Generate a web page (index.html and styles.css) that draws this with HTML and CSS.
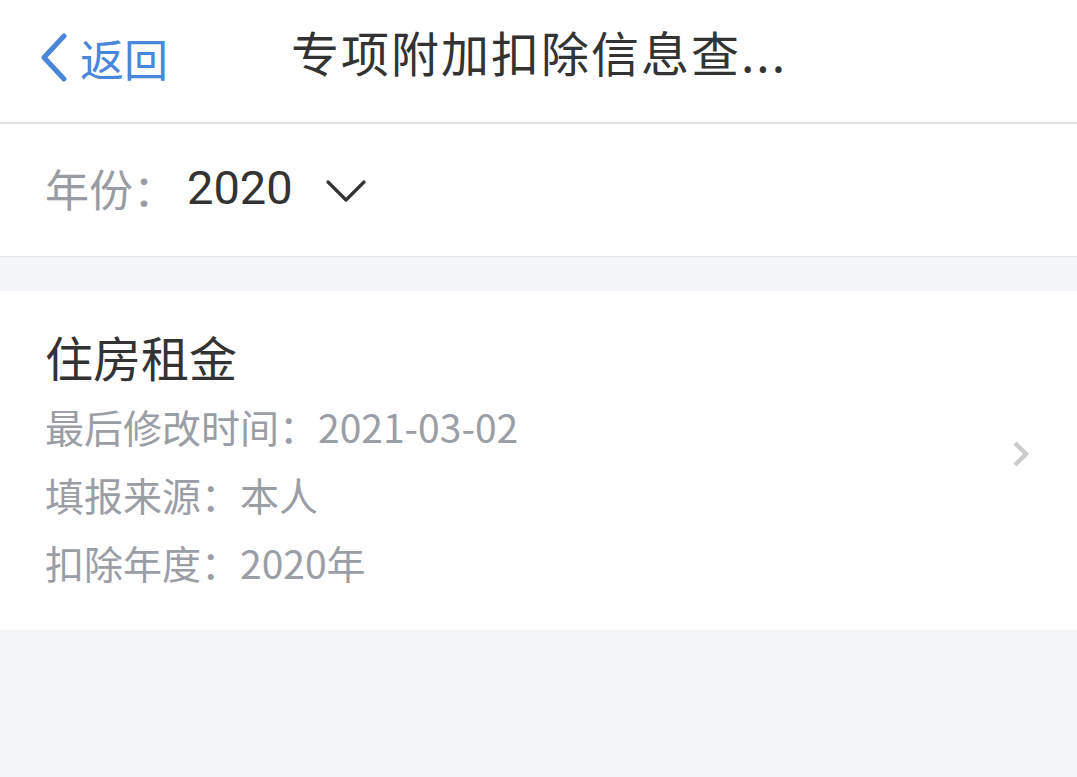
FILE: index.html
```html
<!DOCTYPE html>
<html lang="zh-CN">
<head>
<meta charset="utf-8">
<link rel="stylesheet" href="styles.css">
</head>
<body>
<div class="page">
  <header class="nav">
    <div class="back">
      <svg class="back-icon" width="30" height="50" viewBox="0 0 30 50"><polyline points="24,3 4,24.5 24,46" fill="none" stroke="#4a86d9" stroke-width="5" stroke-linecap="round" stroke-linejoin="round"/></svg>
      <span class="back-text">返回</span>
    </div>
    <div class="title">专项附加扣除信息查...</div>
  </header>
  <div class="year-row">
    <span class="year-label">年份：</span>
    <span class="year-value">2020</span>
    <svg class="year-caret" width="44" height="24" viewBox="0 0 44 24"><polyline points="3,3 21,21 39,3" fill="none" stroke="#333" stroke-width="3.2" stroke-linecap="round" stroke-linejoin="round"/></svg>
  </div>
  <div class="gap"></div>
  <div class="card">
    <div class="card-body">
      <div class="card-title">住房租金</div>
      <div class="info">最后修改时间：2021-03-02</div>
      <div class="info">填报来源：本人</div>
      <div class="info">扣除年度：2020年</div>
    </div>
    <svg class="arrow" width="22" height="30" viewBox="0 0 22 30"><polyline points="4,3 15,14 4,25" fill="none" stroke="#cdcdcd" stroke-width="4.5" stroke-linejoin="miter"/></svg>
  </div>
</div>
</body>
</html>
```
FILE: styles.css
```css
html, body {
  margin: 0;
  padding: 0;
  background: #f4f5f9;
}
body {
  font-family: "Noto Sans CJK SC", "Noto Sans", sans-serif;
  width: 1077px;
  height: 777px;
  overflow: hidden;
}
.page {
  display: flex;
  flex-direction: column;
}
.nav {
  height: 122px;
  background: #fff;
  border-bottom: 2px solid #e3e3e3;
  display: flex;
  align-items: center;
  box-sizing: content-box;
}
.back {
  display: flex;
  align-items: center;
  margin-left: 40px;
  width: 251px;
  padding-bottom: 6px;
}
.back-icon {
  display: block;
  margin-right: 10px;
}
.back-text {
  color: #4a86d9;
  font-size: 44px;
  line-height: 60px;
}
.title {
  color: #333;
  font-size: 48px;
  line-height: 60px;
  padding-bottom: 20px;
  letter-spacing: 2px;
}
.year-row {
  background: #fff;
  border-bottom: 1px solid #e4e5e8;
  display: flex;
  align-items: center;
  padding-left: 45px;
  padding-bottom: 5px;
  box-sizing: border-box;
  height: 133px;
}
.year-label {
  color: #999ca3;
  font-size: 44px;
  line-height: 60px;
}
.year-value {
  color: #333;
  font-size: 47px;
  line-height: 60px;
  margin-left: 10px;
  font-family: Roboto, "Noto Sans CJK SC", sans-serif;
}
.year-caret {
  display: block;
  margin-left: 32px;
  margin-top: 6px;
}
.gap {
  height: 34px;
}
.card {
  background: #fff;
  display: flex;
  align-items: center;
  justify-content: space-between;
  padding: 35px 44px 34px 45px;
}
.card-title {
  color: #333;
  font-size: 48px;
  line-height: 60px;
  margin-bottom: 6px;
}
.info {
  color: #9b9ea5;
  font-size: 39px;
  line-height: 68px;
}
.arrow {
  display: block;
  margin-top: -12px;
}
```
